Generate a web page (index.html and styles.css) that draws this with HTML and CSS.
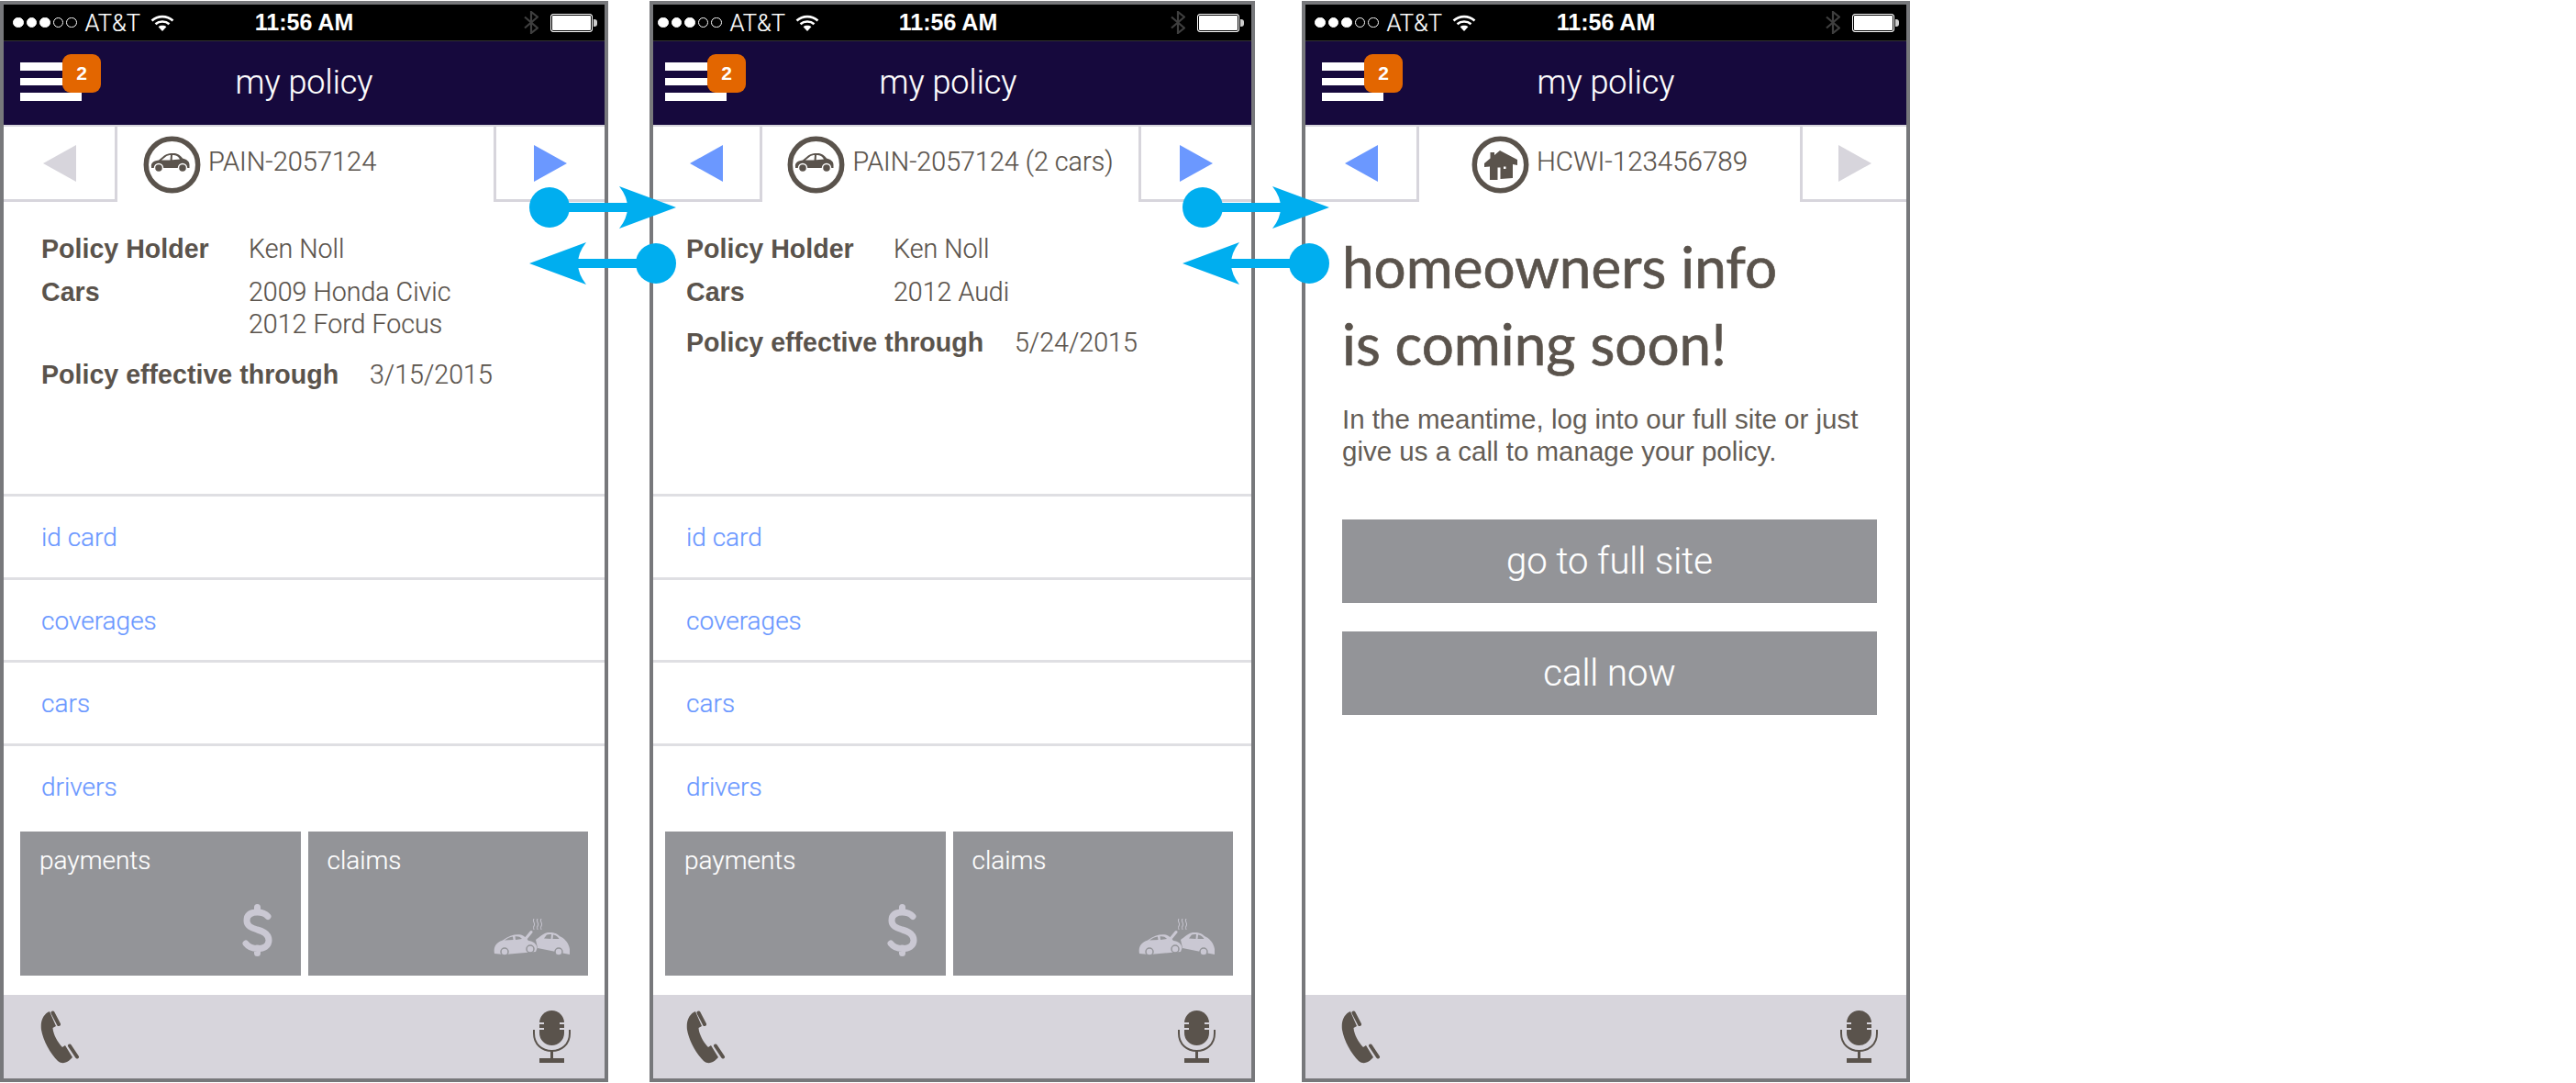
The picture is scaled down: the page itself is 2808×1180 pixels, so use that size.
FILE: index.html
```html
<!DOCTYPE html>
<html lang="en">
<head>
    <meta charset="UTF-8">
    <title>my policy</title>
    <link rel="stylesheet" href="styles.css">
</head>
<body>
<div class="page">

    <!-- phone 1 -->
    <div class="phone phone-a">
        <div class="status">
            <div class="status-left">
                <span class="dots"><i class="on"></i><i class="on"></i><i class="on"></i><i></i><i></i></span>
                <span class="carrier">AT&amp;T</span>
                <svg class="wifi"><use href="#i-wifi"/></svg>
            </div>
            <div class="clock">11:56 AM</div>
            <div class="status-right">
                <svg class="bt"><use href="#i-bt"/></svg>
                <span class="battery"></span>
            </div>
        </div>
        <div class="nav">
            <div class="menu"><span></span><span></span><span></span><b class="badge">2</b></div>
            <div class="nav-title">my policy</div>
        </div>
        <div class="tabs">
            <div class="tab-btn tab-left"><span class="tri tri-left off"></span></div>
            <div class="tab-title">
                <svg class="ring"><use href="#i-car"/></svg>
                <span class="policy-no">PAIN-2057124</span>
            </div>
            <div class="tab-btn tab-right"><span class="tri tri-right"></span></div>
        </div>
        <div class="info">
            <div class="row"><span class="lbl">Policy Holder</span><span class="val">Ken Noll</span></div>
            <div class="row"><span class="lbl">Cars</span><span class="val">2009 Honda Civic<br>2012 Ford Focus</span></div>
            <div class="row row-through"><span class="lbl">Policy effective through</span><span class="val">3/15/2015</span></div>
        </div>
        <ul class="links">
            <li>id card</li>
            <li>coverages</li>
            <li>cars</li>
            <li>drivers</li>
        </ul>
        <div class="cards">
            <div class="card">payments<svg class="dollar"><use href="#i-dollar"/></svg></div>
            <div class="card">claims<svg class="crash"><use href="#i-crash"/></svg></div>
        </div>
        <div class="footer">
            <svg class="call"><use href="#i-phone"/></svg>
            <svg class="mic"><use href="#i-mic"/></svg>
        </div>
    </div>

    <!-- phone 2 -->
    <div class="phone phone-b">
        <div class="status">
            <div class="status-left">
                <span class="dots"><i class="on"></i><i class="on"></i><i class="on"></i><i></i><i></i></span>
                <span class="carrier">AT&amp;T</span>
                <svg class="wifi"><use href="#i-wifi"/></svg>
            </div>
            <div class="clock">11:56 AM</div>
            <div class="status-right">
                <svg class="bt"><use href="#i-bt"/></svg>
                <span class="battery"></span>
            </div>
        </div>
        <div class="nav">
            <div class="menu"><span></span><span></span><span></span><b class="badge">2</b></div>
            <div class="nav-title">my policy</div>
        </div>
        <div class="tabs">
            <div class="tab-btn tab-left"><span class="tri tri-left"></span></div>
            <div class="tab-title">
                <svg class="ring"><use href="#i-car"/></svg>
                <span class="policy-no">PAIN-2057124 (2 cars)</span>
            </div>
            <div class="tab-btn tab-right"><span class="tri tri-right"></span></div>
        </div>
        <div class="info">
            <div class="row"><span class="lbl">Policy Holder</span><span class="val">Ken Noll</span></div>
            <div class="row"><span class="lbl">Cars</span><span class="val">2012 Audi</span></div>
            <div class="row row-through"><span class="lbl">Policy effective through</span><span class="val">5/24/2015</span></div>
        </div>
        <ul class="links">
            <li>id card</li>
            <li>coverages</li>
            <li>cars</li>
            <li>drivers</li>
        </ul>
        <div class="cards">
            <div class="card">payments<svg class="dollar"><use href="#i-dollar"/></svg></div>
            <div class="card">claims<svg class="crash"><use href="#i-crash"/></svg></div>
        </div>
        <div class="footer">
            <svg class="call"><use href="#i-phone"/></svg>
            <svg class="mic"><use href="#i-mic"/></svg>
        </div>
    </div>

    <!-- phone 3 -->
    <div class="phone phone-c">
        <div class="status">
            <div class="status-left">
                <span class="dots"><i class="on"></i><i class="on"></i><i class="on"></i><i></i><i></i></span>
                <span class="carrier">AT&amp;T</span>
                <svg class="wifi"><use href="#i-wifi"/></svg>
            </div>
            <div class="clock">11:56 AM</div>
            <div class="status-right">
                <svg class="bt"><use href="#i-bt"/></svg>
                <span class="battery"></span>
            </div>
        </div>
        <div class="nav">
            <div class="menu"><span></span><span></span><span></span><b class="badge">2</b></div>
            <div class="nav-title">my policy</div>
        </div>
        <div class="tabs">
            <div class="tab-btn tab-left"><span class="tri tri-left"></span></div>
            <div class="tab-title">
                <svg class="ring"><use href="#i-house"/></svg>
                <span class="policy-no">HCWI-123456789</span>
            </div>
            <div class="tab-btn tab-right"><span class="tri tri-right off"></span></div>
        </div>
        <div class="soon">
            <h1>homeowners info<br>is coming soon!</h1>
            <p>In the meantime, log into our full site or just<br>give us a call to manage your policy.</p>
            <div class="big-btn">go to full site</div>
            <div class="big-btn">call now</div>
        </div>
        <div class="footer">
            <svg class="call"><use href="#i-phone"/></svg>
            <svg class="mic"><use href="#i-mic"/></svg>
        </div>
    </div>

    <!-- swipe arrows between the phones -->
    <svg class="arrows" viewBox="0 0 2808 1180">
        <defs>
            <symbol id="i-wifi" viewBox="0 0 26 18">
                <path d="M1.5 6.5C8 .6 18 .6 24.5 6.5M5.5 10.2C9.7 6.6 16.3 6.6 20.5 10.2" fill="none" stroke="#fff" stroke-width="2.6"/>
                <path d="M8.6 13.2C11 11.4 15 11.4 17.4 13.2L13 18Z" fill="#fff"/>
            </symbol>
            <symbol id="i-bt" viewBox="0 0 16 25">
                <path d="M1 6.5L15 18.5L8 24V1L15 6.5L1 18.5" fill="none" stroke="#3f3f3f" stroke-width="2.2"/>
            </symbol>
            <symbol id="i-car" viewBox="0 0 63 63">
                <circle cx="31.5" cy="31.5" r="28.2" fill="none" stroke="#5a534c" stroke-width="5.5"/>
                <path d="M9 34C8.5 30 10 27.5 17 26.5L23 21.5C26 19.5 29 19 33 19C37 19 40 20.5 43 24.5C47 25.5 50.5 27.5 50.5 31.5V35H9Z" fill="#5a534c"/>
                <path d="M20 26.5L25 22.5C26.5 21.5 28 21 30 21L29.5 26.5ZM32 21C36 21 38 22 40 25.5L31.7 26.3Z" fill="#fff"/>
                <circle cx="17" cy="35" r="4.5" fill="#5a534c" stroke="#fff" stroke-width="1.5"/>
                <circle cx="43" cy="35" r="4.5" fill="#5a534c" stroke="#fff" stroke-width="1.5"/>
            </symbol>
            <symbol id="i-house" viewBox="0 0 63 63">
                <circle cx="31.5" cy="31.5" r="28.2" fill="none" stroke="#5a534c" stroke-width="5.5"/>
                <path d="M14 30L20.5 24.5V18H25V21L31 16L50 26V32L45 31V46L31.5 47V34.5H28.5V48H20V33.5L14 34Z" fill="#5a534c"/>
                <rect x="35" y="33.5" width="2.5" height="2.5" fill="#fff"/>
            </symbol>
            <symbol id="i-dollar" viewBox="0 0 33 57">
                <path d="M16.5 3.5V9M16.5 48V53.5M28 13.5C25 10 21 9 16.5 9C9 9 5 12 5 18C5 24 10 26 16.5 28C24 30 29 33 29 39.5C29 45.500 24 48.500 16.5 48.500C11 48.500 7 47 4 43" fill="none" stroke="#cac8d3" stroke-width="7" stroke-linecap="round"/>
            </symbol>
            <symbol id="i-crash" viewBox="0 0 83 42">
                <path d="M1 39C-.5 32 3 26.5 10 24.5C17 19 24 17.5 30 18.5C33 19.5 36 22 38 25C43 25.5 47 28 47.5 33L46 37L12 40Z" fill="#cac8d3"/>
                <path d="M46 24C50 21 54 17 59 16C64 15.5 69 16.5 72 20C77 22 82 27 83 34V40L48 33Z" fill="#cac8d3"/>
                <path d="M34 24L41 15.5" stroke="#cac8d3" stroke-width="3" stroke-linecap="round"/>
                <path d="M12 24.5C15 22 18 21 21 20.5L21.5 24ZM23.5 20.3C26.5 20 29 20.5 31 23L24 24ZM55 22.5L58 18.5C60 18 62 18 63 18L62.5 23ZM65 18.5C68 19 70 20.5 71.5 23L64.5 23Z" fill="#939498"/>
                <circle cx="12" cy="37" r="4" fill="#cac8d3" stroke="#939498" stroke-width="1.5"/>
                <circle cx="40" cy="34" r="4" fill="#cac8d3" stroke="#939498" stroke-width="1.5"/>
                <circle cx="71" cy="37" r="4" fill="#cac8d3" stroke="#939498" stroke-width="1.5"/>
                <path d="M44 1C42 4 46 6 44 9C43 11 44 12 44 13M48 1C46 4 50 6 48 9C47 11 48 12 48 13M52 1C50 4 54 6 52 9C51 11 52 12 52 13" fill="none" stroke="#cac8d3" stroke-width="1"/>
            </symbol>
            <symbol id="i-phone" viewBox="0 0 43 58">
                <path d="M8 2C2 6 0 13 1 21C3 33 11 47 19 55C24 59 29 57 33 53L35 51L27 38L24 40C19 35 14 26 13.5 19L17 17L10 1Z" fill="#5a534c"/>
                <path d="M13.5 2.5L20 15M32 38.5L40 50.5" stroke="#5a534c" stroke-width="4" stroke-linecap="round"/>
            </symbol>
            <symbol id="i-mic" viewBox="0 0 41 57">
                <rect x="7" y="0" width="27" height="38" rx="13.5" fill="#5a534c"/>
                <path d="M7 14H12M29 14H34M7 20H12M29 20H34" stroke="#d7d5dc" stroke-width="2"/>
                <path d="M1 21V25C1 37 10 44 20.5 44C31 44 40 37 40 25V21" fill="none" stroke="#5a534c" stroke-width="2"/>
                <rect x="19" y="44" width="3" height="8" fill="#5a534c"/>
                <rect x="7" y="52" width="27" height="5" fill="#5a534c"/>
            </symbol>
            <g id="arrow-right">
                <circle cx="599" cy="226" r="22"/>
                <rect x="599" y="221" width="90" height="10"/>
                <path d="M675 203L737 226L675 249Q693 226 675 203Z"/>
            </g>
            <g id="arrow-left">
                <circle cx="715" cy="287" r="22"/>
                <rect x="625" y="282" width="90" height="10"/>
                <path d="M639 264L577 287L639 310Q621 287 639 264Z"/>
            </g>
        </defs>
        <use href="#arrow-right"/>
        <use href="#arrow-left"/>
        <use href="#arrow-right" x="712"/>
        <use href="#arrow-left" x="712"/>
    </svg>
</div>
</body>
</html>
```

FILE: styles.css
```css
html, body {
    margin: 0;
    padding: 0;
    background: #fff;
}

.page {
    position: relative;
    display: flex;
    align-items: flex-start;
    width: 2808px;
    height: 1180px;
    padding-top: 1px;
    box-sizing: border-box;
    font-family: Roboto, "Liberation Sans", sans-serif;
    font-weight: 300;
    color: #5a534c;
    -webkit-text-stroke: .2px;
}

.arrows {
    position: absolute;
    left: 0;
    top: 0;
    width: 2808px;
    height: 1180px;
    fill: #00aeef;
    pointer-events: none;
}

/* phones */
.phone {
    display: flex;
    flex-direction: column;
    flex: none;
    box-sizing: border-box;
    width: 663px;
    height: 1178px;
    border: 4px solid #77787b;
}

.phone-b {
    width: 660px;
    margin: 0 51px 0 45px;
}

/* status bar */
.status {
    display: grid;
    grid-template-columns: 1fr auto 1fr;
    align-items: center;
    flex: none;
    height: 40px;
    box-sizing: border-box;
    background: #000;
    border-bottom: 1px solid #333;
    color: #fff;
    font-family: "Liberation Sans", sans-serif;
}

.status-left {
    display: flex;
    align-items: center;
    padding-left: 10px;
}

.phone-b .status-left {
    padding-left: 5px;
}

.phone-b .clock {
    margin-right: 9px;
}

.dots {
    display: flex;
    gap: 3px;
}

.dots i {
    box-sizing: border-box;
    width: 11.5px;
    height: 11.5px;
    border: 1px solid #fff;
    border-radius: 50%;
}

.dots i.on {
    background: #fff;
}

.carrier {
    margin-left: 9px;
    font-family: Roboto, sans-serif;
    font-weight: 300;
    font-size: 25.5px;
}

.wifi {
    width: 26px;
    height: 18px;
    margin-left: 11px;
}

.clock {
    font-weight: bold;
    font-size: 25px;
    -webkit-text-stroke: 0;
}

.status-right {
    display: flex;
    align-items: center;
    justify-content: flex-end;
    padding-right: 13px;
}

.bt {
    width: 16px;
    height: 25px;
    margin-right: 13px;
}

.battery {
    position: relative;
    box-sizing: border-box;
    width: 46px;
    height: 20px;
    border: 1px solid #fff;
    border-radius: 3px;
    background: #fff;
    box-shadow: inset 0 0 0 1px #000;
}

.battery::after {
    content: "";
    position: absolute;
    right: -6px;
    top: 5px;
    width: 4px;
    height: 8px;
    border-radius: 0 3px 3px 0;
    background: #ccc;
}

/* nav */
.nav {
    position: relative;
    display: flex;
    align-items: center;
    justify-content: center;
    flex: none;
    height: 93px;
    box-sizing: border-box;
    background: #16093d;
    border-bottom: 2px solid #d7d5dc;
}

.nav-title {
    margin-bottom: 1px;
    color: #fff;
    font-size: 36px;
}

.phone-b .nav-title {
    margin-right: 9px;
}

.menu {
    position: absolute;
    left: 18px;
    top: 23px;
    display: flex;
    flex-direction: column;
    gap: 8px;
    width: 67px;
}

.phone-b .menu {
    left: 13px;
}

.menu span {
    height: 8.5px;
    background: #fff;
}

.badge {
    position: absolute;
    left: 46px;
    top: -9px;
    width: 42px;
    height: 42px;
    border-radius: 9px;
    background: #e36600;
    color: #fff;
    font-family: "Liberation Sans", sans-serif;
    font-weight: bold;
    font-size: 21px;
    line-height: 42px;
    text-align: center;
    -webkit-text-stroke: 0;
}

/* policy tabs */
.tabs {
    display: flex;
    flex: none;
    height: 82px;
}

.tab-btn {
    display: flex;
    align-items: center;
    justify-content: center;
    flex: none;
    box-sizing: border-box;
    width: 124px;
    border-bottom: 3px solid #d7d5dc;
}

.tab-left {
    border-right: 3px solid #d7d5dc;
}

.tab-right {
    width: 121px;
    border-left: 3px solid #d7d5dc;
}

.phone-b .tab-left {
    width: 119px;
}

.phone-b .tab-right {
    width: 123px;
}

.phone-c .tab-right {
    width: 116px;
}

.tri {
    width: 0;
    height: 0;
    border-top: 20.5px solid transparent;
    border-bottom: 20.5px solid transparent;
}

.tri-left {
    border-right: 36px solid #6b98ff;
}

.tri-right {
    border-left: 36px solid #6b98ff;
}

.tri-left.off {
    border-right-color: #d7d5dc;
}

.tri-right.off {
    border-left-color: #d7d5dc;
}

.tab-title {
    display: flex;
    align-items: center;
    justify-content: center;
    flex: 1;
    gap: 8px;
}

.phone-a .tab-title {
    justify-content: flex-start;
    padding-left: 28px;
}

.ring {
    flex: none;
    width: 63px;
    height: 63px;
}

.policy-no {
    margin-bottom: 7px;
    font-size: 29px;
}

.phone-b .policy-no {
    font-size: 28.7px;
}

.phone-c .policy-no {
    font-size: 29.5px;
}

/* policy details */
.info {
    flex: none;
    height: 318px;
    box-sizing: border-box;
    padding: 34px 0 0 41px;
    font-size: 28.6px;
    line-height: 35px;
}

.phone-b .info {
    padding-left: 36px;
}

.row {
    display: flex;
    margin-bottom: 12px;
}

.row-through {
    margin-top: 20px;
}

.lbl {
    min-width: 226px;
    font-family: "Liberation Sans", sans-serif;
    font-weight: bold;
    font-size: 28.6px;
    -webkit-text-stroke: 0;
}

.row-through .lbl {
    min-width: 358px;
}

/* link list */
.links {
    flex: none;
    margin: 0;
    padding: 0;
    list-style: none;
    font-size: 28px;
    color: #6b98ff;
}

.links li {
    box-sizing: border-box;
    height: 90.7px;
    padding: 25px 0 0 41px;
    border-top: 3px solid #dfdfe3;
    line-height: 40px;
}

.links li:last-child {
    height: 96px;
}

.phone-b .links li {
    padding-left: 36px;
}

/* payment and claim cards */
.cards {
    display: flex;
    flex: none;
    gap: 8px;
    padding: 0 18px;
}

.phone-b .cards {
    padding: 0 20px 0 13px;
}

.card {
    position: relative;
    flex: 1;
    height: 157px;
    box-sizing: border-box;
    padding: 14px 0 0 21px;
    background: #939498;
    color: #fff;
    font-size: 28px;
    line-height: 35px;
}

.dollar {
    position: absolute;
    right: 31px;
    bottom: 21px;
    width: 33px;
    height: 57px;
}

.crash {
    position: absolute;
    right: 20px;
    bottom: 21px;
    width: 83px;
    height: 42px;
}

/* bottom bar */
.footer {
    display: flex;
    align-items: center;
    justify-content: space-between;
    flex: none;
    margin-top: auto;
    height: 91px;
    box-sizing: border-box;
    padding: 0 37px 0 40px;
    background: #d7d5dc;
}

.phone-b .footer {
    padding: 0 39px 0 36px;
}

.phone-c .footer {
    padding: 0 31px 0 39px;
}

.call {
    width: 43px;
    height: 58px;
}

.mic {
    width: 41px;
    height: 57px;
}

/* homeowners panel */
.soon {
    padding: 0 32px 0 40px;
}

.soon h1 {
    margin: 28px 0 0;
    font-family: Lato, sans-serif;
    font-weight: 400;
    font-size: 62px;
    line-height: 84px;
    -webkit-text-stroke: .7px;
}

.soon p {
    margin: 23px 0 0;
    font-family: "Liberation Sans", sans-serif;
    font-weight: 400;
    font-size: 29.5px;
    line-height: 35px;
    color: #645d56;
    -webkit-text-stroke: 0;
}

.big-btn {
    height: 91px;
    margin: 0 0 31px;
    background: #939498;
    color: #fff;
    font-size: 40px;
    line-height: 92px;
    text-align: center;
}

.soon p + .big-btn {
    margin-top: 57px;
}
```
